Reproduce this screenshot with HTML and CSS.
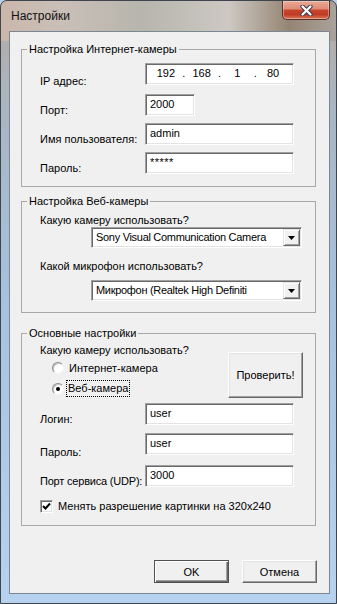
FILE: index.html
```html
<!DOCTYPE html>
<html lang="ru">

<head>
    <meta charset="UTF-8">
    <title>Настройки</title>
    <link rel="stylesheet" href="styles.css">
</head>

<body>
    <div class="window">
        <div class="titlebar">
            <span class="title">Настройки</span>
            <div class="close-btn">
                <svg width="13" height="11" viewBox="0 0 13 11">
                    <path d="M2.5 1.5 L10.5 9.5 M10.5 1.5 L2.5 9.5" stroke="#3b3b4a" stroke-width="4.2" stroke-linecap="round" fill="none"/>
                    <path d="M2.5 1.5 L10.5 9.5 M10.5 1.5 L2.5 9.5" stroke="#ffffff" stroke-width="2.2" stroke-linecap="round" fill="none"/>
                </svg>
            </div>
        </div>

        <div class="client">
            <!-- Internet camera -->
            <fieldset class="group group-ipcam">
                <legend>Настройка Интернет-камеры</legend>
                <div class="group-body">
                    <div class="row row-ip">
                        <label class="lbl lbl-low">IP адрес:</label>
                        <div class="field ip-field">
                            <span class="octet">192</span><span class="dot">.</span>
                            <span class="octet">168</span><span class="dot">.</span>
                            <span class="octet">1</span><span class="dot">.</span>
                            <span class="octet">80</span>
                        </div>
                    </div>
                    <div class="row row-port">
                        <label class="lbl">Порт:</label>
                        <div class="field field-short">2000</div>
                    </div>
                    <div class="row row-next">
                        <label class="lbl">Имя пользователя:</label>
                        <div class="field">admin</div>
                    </div>
                    <div class="row row-next">
                        <label class="lbl">Пароль:</label>
                        <div class="field field-pass">*****</div>
                    </div>
                </div>
            </fieldset>

            <!-- Web camera -->
            <fieldset class="group group-webcam">
                <legend>Настройка Веб-камеры</legend>
                <div class="group-body">
                    <div class="question q-first">Какую камеру использовать?</div>
                    <div class="combo">
                        <span class="combo-value">Sony Visual Communication Camera</span>
                        <span class="combo-arrow">
                            <svg width="7" height="4" viewBox="0 0 7 4"><path d="M0 0 H7 L3.5 4 Z" fill="#000"/></svg>
                        </span>
                    </div>
                    <div class="question q-second">Какой микрофон использовать?</div>
                    <div class="combo">
                        <span class="combo-value">Микрофон (Realtek High Definiti</span>
                        <span class="combo-arrow">
                            <svg width="7" height="4" viewBox="0 0 7 4"><path d="M0 0 H7 L3.5 4 Z" fill="#000"/></svg>
                        </span>
                    </div>
                </div>
            </fieldset>

            <!-- Main settings -->
            <fieldset class="group group-main">
                <legend>Основные настройки</legend>
                <div class="group-body">
                    <div class="cam-choice">
                        <div class="cam-list">
                            <div class="question q-main">Какую камеру использовать?</div>
                            <div class="radio-row">
                                <span class="radio"></span>
                                <span class="radio-text">Интернет-камера</span>
                            </div>
                            <div class="radio-row">
                                <span class="radio checked"></span>
                                <span class="radio-text focused">Веб-камера</span>
                            </div>
                        </div>
                        <button class="btn btn-check">Проверить!</button>
                    </div>
                    <div class="row row-login">
                        <label class="lbl">Логин:</label>
                        <div class="field">user</div>
                    </div>
                    <div class="row row-pass2">
                        <label class="lbl lbl-lower">Пароль:</label>
                        <div class="field">user</div>
                    </div>
                    <div class="row row-udp">
                        <label class="lbl lbl-tight">Порт сервиса (UDP):</label>
                        <div class="field">3000</div>
                    </div>
                    <div class="check-row">
                        <span class="checkbox">
                            <svg width="9" height="9" viewBox="0 0 9 9"><path d="M1 4 L3.5 6.5 L8 1.5" stroke="#000" stroke-width="2" fill="none"/></svg>
                        </span>
                        <span>Менять разрешение картинки на 320x240</span>
                    </div>
                </div>
            </fieldset>

            <div class="dialog-buttons">
                <button class="btn btn-default">OK</button>
                <button class="btn">Отмена</button>
            </div>
        </div>
    </div>
</body>

</html>
```

FILE: styles.css
```css
body {
    margin: 0;
    background: #b9cfe6;
    font-family: "Liberation Sans", Arial, sans-serif;
    font-size: 11px;
    line-height: 14px;
    color: #000;
}

/* Aero window frame */
.window {
    width: 337px;
    height: 604px;
    box-sizing: border-box;
    border: 1px solid #3f454c;
    border-radius: 7px 7px 0 0;
    display: flex;
    flex-direction: column;
    background:
        linear-gradient(to right, #cbb7ab 0%, #c9bfb8 18%, #b7b5ad 42%, #cdc8c3 68%, #958573 86%, #a9a29b 100%) top / 100% 40px no-repeat,
        linear-gradient(to bottom, #b6aaa1 0, #a9b6c3 110px, #a6c2de 300px, #b7d2ee 100%);
    overflow: hidden;
}

.titlebar {
    height: 30px;
    display: flex;
    align-items: flex-start;
    flex-shrink: 0;
}

.title {
    font-size: 12px;
    line-height: 14px;
    padding: 8px 0 0 10px;
    color: #111;
}

.close-btn {
    margin-left: auto;
    margin-right: 6px;
    width: 48px;
    height: 19px;
    box-sizing: border-box;
    border: 1px solid #5b2f29;
    border-top: none;
    border-radius: 0 0 5px 5px;
    background: linear-gradient(to bottom, #e9a996 0%, #de8b75 45%, #c8442c 50%, #c23b24 75%, #d9785a 100%);
    box-shadow: inset 0 0 0 1px rgba(255, 255, 255, 0.35);
    display: flex;
    align-items: center;
    justify-content: center;
}

/* Dialog client area */
.client {
    margin-left: 8px;
    width: 321px;
    height: 563px;
    box-sizing: border-box;
    border: 1px solid #7b8794;
    background: #f0f0f0;
    flex-shrink: 0;
}

.group {
    margin: 0 0 0 11px;
    padding: 0;
    width: 295px;
    min-width: 0;
    box-sizing: border-box;
    border: 1px solid #a8a8a8;
}

.group legend {
    margin-left: 5px;
    padding: 0 2px;
    line-height: 14px;
}

.group-body {
    padding: 0 12px 12px 18px;
}

.group-ipcam {
    margin-top: 10px;
}

.group-webcam {
    margin-top: 7px;
}

.group-webcam .group-body {
    padding-bottom: 11px;
}

.group-main {
    margin-top: 13px;
}

/* Label + field rows */
.row {
    display: flex;
    height: 22px;
    margin-top: 7px;
}

.row-port {
    margin-top: 9px;
}

.lbl {
    width: 105px;
    flex-shrink: 0;
    padding-top: 9px;
    white-space: nowrap;
}

.lbl-low {
    padding-top: 11px;
}

.lbl-lower {
    padding-top: 12px;
}

.lbl-tight {
    letter-spacing: -0.2px;
}

.field {
    width: 149px;
    height: 22px;
    box-sizing: border-box;
    background: #fff;
    border: 1px solid;
    border-color: #a0a0a0 #fff #fff #a0a0a0;
    box-shadow: inset 1px 1px 0 #696969, inset -1px -1px 0 #e3e3e3;
    padding: 2px 4px;
}

.field-short {
    width: 50px;
}

.field-pass {
    letter-spacing: 0.5px;
}

.ip-field {
    display: flex;
    padding-left: 4px;
}

.ip-field .octet {
    width: 32px;
    text-align: center;
}

.ip-field .dot {
    width: 4px;
    text-align: center;
}

/* Web camera */
.question {
    white-space: nowrap;
}

.q-first {
    margin-top: 5px;
}

.q-second {
    margin-top: 11px;
}

.combo {
    margin-left: 51px;
    margin-top: 0;
    width: 211px;
    height: 21px;
    box-sizing: border-box;
    display: flex;
    background: #fff;
    border: 1px solid;
    border-color: #a0a0a0 #fff #fff #a0a0a0;
    box-shadow: inset 1px 1px 0 #696969, inset -1px -1px 0 #e3e3e3;
    padding: 1px;
}

.q-second + .combo {
    margin-top: 7px;
}

.combo-value {
    flex: 1;
    padding-left: 3px;
    line-height: 17px;
    letter-spacing: -0.3px;
    white-space: nowrap;
    overflow: hidden;
}

.combo-arrow {
    width: 17px;
    height: 17px;
    box-sizing: border-box;
    background: #f0f0f0;
    border: 1px solid;
    border-color: #e3e3e3 #696969 #696969 #e3e3e3;
    box-shadow: inset 1px 1px 0 #fff, inset -1px -1px 0 #a0a0a0;
    display: flex;
    align-items: center;
    justify-content: center;
}

/* Main settings */
.cam-choice {
    display: flex;
    justify-content: space-between;
}

.q-main {
    margin-top: 3px;
}

.radio-row {
    height: 21px;
    display: flex;
    align-items: center;
    padding-left: 12px;
}

.radio {
    width: 12px;
    height: 12px;
    box-sizing: border-box;
    border-radius: 50%;
    border: 1px solid;
    border-color: #8a8a8a #f4f4f4 #f4f4f4 #8a8a8a;
    background: #fff;
    box-shadow: inset 1px 1px 0 #c8c8c8;
    margin-right: 5px;
    display: flex;
    align-items: center;
    justify-content: center;
}

.radio.checked::after {
    content: "";
    width: 4px;
    height: 4px;
    border-radius: 50%;
    background: #000;
}

.radio-text.focused {
    outline: 1px dotted #000;
    outline-offset: 0;
    padding: 0 1px;
    margin-left: -2px;
    line-height: 15px;
}

.btn {
    font-family: inherit;
    font-size: 11px;
    color: #000;
    width: 75px;
    height: 23px;
    padding: 0;
    box-sizing: border-box;
    background: #f0f0f0;
    border: 1px solid;
    border-color: #fff #696969 #696969 #fff;
    box-shadow: inset -1px -1px 0 #a0a0a0, inset 1px 1px 0 #e3e3e3;
}

.btn-check {
    margin-top: 12px;
    height: 46px;
}

.btn-default {
    border: 1px solid #505050;
    box-shadow: inset 1px 1px 0 #fff, inset -1px -1px 0 #696969, inset -2px -2px 0 #a0a0a0;
}

.row-login {
    margin-top: 4px;
}

.row-pass2 {
    margin-top: 8px;
}

.row-udp {
    margin-top: 10px;
}

.check-row {
    margin-top: 12px;
    display: flex;
    align-items: center;
    height: 14px;
    white-space: nowrap;
}

.checkbox {
    width: 13px;
    height: 13px;
    box-sizing: border-box;
    background: #fff;
    border: 1px solid;
    border-color: #a0a0a0 #fff #fff #a0a0a0;
    box-shadow: inset 1px 1px 0 #696969, inset -1px -1px 0 #e3e3e3;
    margin-right: 5px;
    display: flex;
    align-items: center;
    justify-content: center;
}

.dialog-buttons {
    display: flex;
    justify-content: flex-end;
    gap: 13px;
    margin-top: 34px;
    padding-right: 12px;
}
```
